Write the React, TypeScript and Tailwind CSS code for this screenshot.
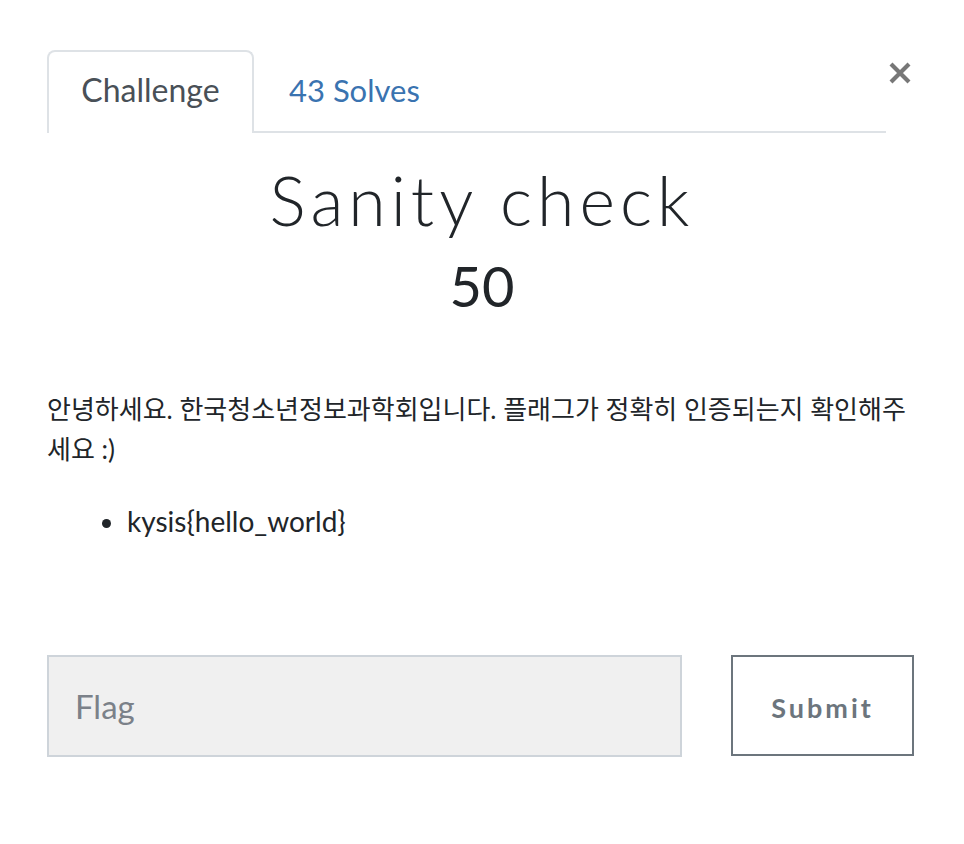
import React from 'react';

export default function App() {
  return (
    <div className="min-h-[844px] w-[964px] bg-white text-[#212529] font-['Lato','Noto_Sans_CJK_KR',sans-serif]">
      <div className="relative px-[47px] pt-[48px]">
        {/* TABS */}
        <div className="flex items-end w-[839px] border-b-2 border-[#dee2e6]">
          <div className="-mb-[2px] w-[207px] h-[83px] flex items-center justify-center pb-[6px] border-2 border-b-0 border-[#dee2e6] rounded-t-[8px] bg-white text-[32px] text-[#495057]">
            Challenge
          </div>
          <div className="h-[83px] flex items-center pl-[35px] pt-[2px] text-[31px] text-[#3a73b0]">
            43 Solves
          </div>
        </div>
        <button className="absolute right-[51px] top-[56px] w-[26px] h-[34px] flex items-center justify-center text-[#777]">
          <svg width="24" height="24" viewBox="0 0 24 24">
            <path d="M3 3 L21 21 M21 3 L3 21" stroke="currentColor" strokeWidth="4.2" strokeLinecap="butt" />
          </svg>
        </button>

        {/* TITLE */}
        <div className="text-center pt-[27px]">
          <h2 className="text-[68px] leading-[80px] font-light tracking-[5px] font-['Lato',sans-serif]">Sanity check</h2>
          <h3 className="text-[56px] leading-[72px] mt-[10px]">50</h3>
        </div>

        {/* DESCRIPTION */}
        <div className="mt-[67px] text-[28px] leading-[40px]">
          <p className="text-[26px]">안녕하세요. 한국청소년정보과학회입니다. 플래그가 정확히 인증되는지 확인해주세요 :)</p>
          <ul className="list-disc pl-[80px] mt-[32px]">
            <li>kysis{'{'}hello_world{'}'}</li>
          </ul>
        </div>

        {/* SUBMIT */}
        <div className="flex mt-[114px] gap-[49px]">
          <input
            placeholder="Flag"
            className="w-[635px] h-[102px] bg-[#f0f0f0] border-2 border-[#ced4da] px-[26px] text-[33px] placeholder:text-[#7b8189] outline-none"
          />
          <button className="w-[183px] h-[101px] pt-[5px] border-2 border-[#6c757d] text-[#6c757d] text-[27px] font-bold tracking-[3px]">
            Submit
          </button>
        </div>
      </div>
    </div>
  );
}
